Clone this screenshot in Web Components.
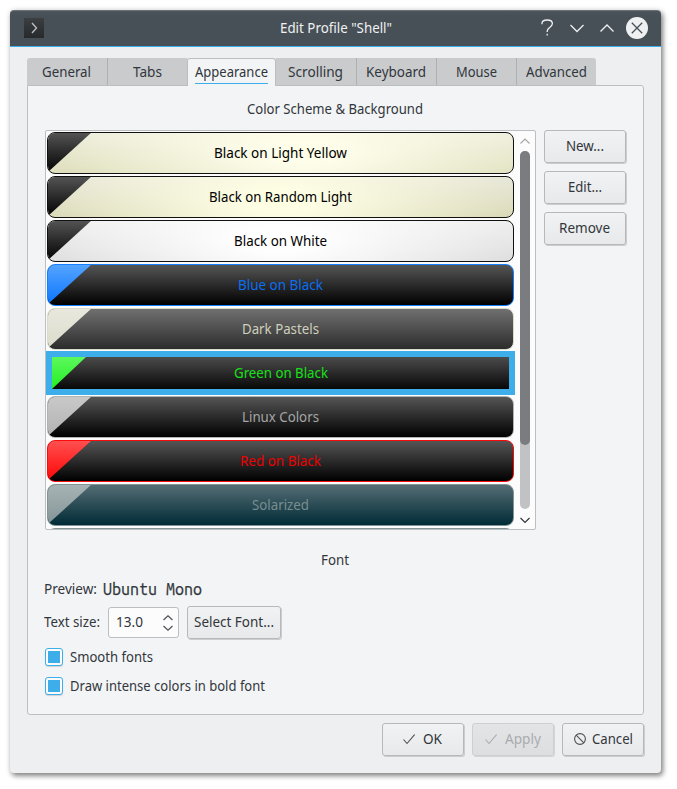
<!DOCTYPE html>
<html lang="en">
<head>
<meta charset="utf-8">
<title>Edit Profile "Shell"</title>
<style>
html,body{margin:0;background:#fff}
body{width:677px;height:789px;overflow:hidden;padding:10px 16px 16px 10px;box-sizing:border-box;
font-family:"Noto Sans","Open Sans",sans-serif;font-size:14.4px;line-height:20px;color:#31363b}
</style>
</head>
<body>
<profile-dialog></profile-dialog>
<script>
function define(name, html, init) {
  const tpl = document.createElement('template');
  tpl.innerHTML = '<style>*{box-sizing:border-box}svg{display:block;flex:none}</style>' + html;
  customElements.define(name, class extends HTMLElement {
    connectedCallback() {
      if (this.shadowRoot) return;
      this.attachShadow({mode: 'open'}).appendChild(tpl.content.cloneNode(true));
      if (init) init.call(this, this.shadowRoot);
    }
  });
}

/* A one-line label condensed or widened to the width given in "w". */
define('fit-label', `<style>
:host{display:inline-block;flex:none;height:20px;white-space:nowrap;overflow:visible}
span{display:inline-block;transform-origin:0 50%}
</style><span><slot></slot></span>`, function (root) {
  const w = +this.getAttribute('w'), s = root.querySelector('span');
  this.style.width = w + 'px';
  s.style.transform = 'scaleX(' + w / s.getBoundingClientRect().width + ')';
});

define('title-bar', `<style>
:host{display:flex;height:37px;background:linear-gradient(#4d545b,#475057 5px);border-bottom:1px solid #3daee9;
border-top:1px solid #6b7278;border-radius:4px 4px 0 0;color:#eff0f1;align-items:center;padding:0 12px 1px 14px}
.app{width:20px;height:20px;background:linear-gradient(#3b3f42,#27292b)}
.t{flex:1;display:flex;justify-content:center;padding-left:90px;padding-bottom:1px}
</style>
<div class="app"><svg width="20" height="20" fill="none" stroke="#b9bdbf" stroke-width="1.4"><path d="M8 5l4.500 5L8 15"/></svg></div>
<div class="t"><slot></slot></div>
<svg width="112" height="24" fill="none" stroke="#eff0f1" stroke-width="1.3">
<path d="M5 8.200V7.500Q5 4 10.200 4T15.400 7.600Q15.400 9.500 12.600 11.600Q10.200 13.200 10.200 15.300V16M10.200 17.800v1.600"/>
<path d="M33.500 9l6.500 6.500L46.500 9M63.500 15.500l6.500-6.500L76.500 15.500"/>
<circle cx="100" cy="12" r="11" fill="#eff0f1" stroke="none"/>
<path d="M94.800 6.800l10.400 10.400M105.200 6.800l-10.400 10.400" stroke="#475057"/></svg>`);

define('tab-item', `<style>
:host{display:flex;height:27px;width:80px;background:#c9cbcd;justify-content:center;align-items:center;border-right:1px solid #aeb1b4}
:host([first]){width:81px;border-radius:3px 0 0 0}
:host([noline]){border-right:0}
:host([last]){border-right:0;border-radius:0 3px 0 0}
:host([active]){width:89px;height:28px;background:#f3f4f6;border:1px solid #bcbec0;border-bottom:0;border-radius:3px 3px 0 0;align-items:flex-start}
div{height:20px;margin:1px 1px 0 0}
:host([active]) div{height:25px;padding-top:3px;border-bottom:1px solid #3daee9;margin:0}
</style><div><slot></slot></div>`);

define('push-button', `<style>
:host{display:flex;flex:none;gap:8px;width:82px;height:33px;border:1px solid #b6b8ba;border-radius:3px;
background:linear-gradient(#f1f2f3,#e8e9ea);box-shadow:1px 1px 0 #cbcdcf;justify-content:center;align-items:center;padding:0 1px 1px 0}
:host([disabled]){background:linear-gradient(#e3e4e6,#dddee0);border-color:#cdcfd1;box-shadow:1px 1px 0 #d3d5d7;color:#a9acaf}
</style><slot name="icon"></slot><slot></slot>`);

define('check-option', `<style>
:host{display:flex;height:18px;gap:7px;align-items:center}
i{width:18px;height:18px;border:1px solid #3daee9;border-radius:3px;background:#fcfcfc;padding:2px;box-shadow:0 1px 1px #cfd2d4}
i::before{content:"";display:block;width:12px;height:12px;background:#3daee9}
</style><i></i><slot></slot>`);

define('spin-box', `<style>
:host{display:flex;width:71px;height:31px;border:1px solid #bcbec0;border-radius:3px;background:#fcfcfc;align-items:center;justify-content:space-between;padding:0 5px 2px 6.5px}
svg{margin-top:2px}
</style><slot></slot><svg width="10" height="16" fill="none" stroke="#4d5155" stroke-width="1.200"><path d="M.5 5L5 .8 9.500 5M.5 11L5 15.200 9.500 11"/></svg>`);

define('scheme-row', `<style>
:host{display:block;height:44px;padding:1px}
.c{height:42px;border:1px solid var(--fg);border-radius:8px;position:relative;overflow:hidden;background:var(--bg);display:flex;align-items:center;justify-content:center;color:var(--tx);padding-bottom:1px}
.c::before{content:"";position:absolute;left:-1px;top:-1px;width:45px;height:41px;background:var(--corner);clip-path:polygon(0 0,100% 0,0 100%)}
:host([selected]){padding:6px;background:#3daee9}
:host([selected]) .c{height:32px;border:0;border-radius:0;padding:0}
:host([selected]) .c::before{left:0;top:0;width:34px;height:32px}
</style><div class="c"><slot></slot></div>`, function () {
  for (const k of ['fg', 'bg', 'tx', 'corner']) this.style.setProperty('--' + k, this.getAttribute(k));
});

define('scroll-bar', `<style>
:host{display:flex;flex-direction:column;align-items:center;width:10px;padding:7px 0 5px;height:398px}
.t{width:10px;height:358px;margin:6px 0 8px;border-radius:5px;background:#c1c2c4}
.h{height:294px;border-radius:5px;background:#7b7c80}
</style><svg width="10" height="7" fill="none" stroke="#a4a6a8" stroke-width="1.100"><path d="M.5 5.500L5 1 9.500 5.500"/></svg>
<div class="t"><div class="h"></div></div>
<svg width="10" height="7" fill="none" stroke="#31363b" stroke-width="1.200"><path d="M.5 1L5 5.500 9.500 1"/></svg>`);

define('scheme-list', `<style>
:host{display:flex;flex:none;width:491px;height:400px;border:1px solid #bcbec0;border-radius:2px;background:#fcfcfc;overflow:hidden}
.r{width:469px;height:398px;overflow:hidden;margin-right:5px}
</style><div class="r">
<scheme-row fg="#111" tx="#000" corner="linear-gradient(#555,#000)" bg="radial-gradient(ellipse 245px 85px at 55% 45%,#ffffe8,#fdfdea 15%,rgba(255,255,225,0)),linear-gradient(#ededdc,#dfdfbd)"><fit-label w="133">Black on Light Yellow</fit-label></scheme-row>
<scheme-row fg="#111" tx="#000" corner="linear-gradient(#555,#000)" bg="radial-gradient(ellipse 245px 85px at 50% 60%,#fefee1,#fdfde4 15%,rgba(255,255,215,0)),linear-gradient(#e8e7d9,#d8d8b6)"><fit-label w="143">Black on Random Light</fit-label></scheme-row>
<scheme-row fg="#111" tx="#000" corner="linear-gradient(#555,#000)" bg="radial-gradient(ellipse 245px 85px at 50% 45%,#fff,#fefefe 15%,rgba(255,255,255,0)),linear-gradient(#eee,#ddd)"><fit-label w="93">Black on White</fit-label></scheme-row>
<scheme-row fg="#1480ff" tx="#0a6ff0" corner="linear-gradient(#56a5ff,#0a75ff)" bg="linear-gradient(#555,#000)"><fit-label w="85">Blue on Black</fit-label></scheme-row>
<scheme-row fg="#d9dac9" tx="#cfcfbd" corner="linear-gradient(#e8e8de,#dcdccb)" bg="linear-gradient(#707070,#2c2c2c)"><fit-label w="77">Dark Pastels</fit-label></scheme-row>
<scheme-row selected fg="#18f018" tx="#18e018" corner="linear-gradient(#5cf85c,#24f024)" bg="linear-gradient(#4b4b4b,#080808)"><fit-label w="94">Green on Black</fit-label></scheme-row>
<scheme-row fg="#b2b2b2" tx="#a6a6a6" corner="linear-gradient(#c9c9c9,#b2b2b2)" bg="linear-gradient(#555,#000)"><fit-label w="77">Linux Colors</fit-label></scheme-row>
<scheme-row fg="#fb0a0a" tx="#ec0000" corner="linear-gradient(#ff5151,#ff0505)" bg="linear-gradient(#555,#000)"><fit-label w="81">Red on Black</fit-label></scheme-row>
<scheme-row fg="#839496" tx="#788d91" corner="linear-gradient(#a8b4b5,#839496)" bg="linear-gradient(#556d74,#002b36)"><fit-label w="57">Solarized</fit-label></scheme-row>
<scheme-row fg="#839496" tx="#657b83" corner="linear-gradient(#a8b4b5,#839496)" bg="#fdf6e3"></scheme-row>
</div><scroll-bar></scroll-bar>`);

define('profile-dialog', `<style>
:host{display:flex;flex-direction:column;width:651px;height:763px;background:#eeeff1;border-radius:4px;
box-shadow:2px 3px 5px rgba(0,0,0,.38),1px 1px 6px rgba(0,0,0,.22)}
.tabs{display:flex;height:28px;margin:11px 17px -1px;position:relative}
.panel{height:630px;margin:0 17px;background:#f3f4f6;border:1px solid #bcbec0;border-radius:0 3px 3px 3px;padding:13px 17px 0 17px;display:flex;flex-direction:column}
.h{height:20px;display:flex;justify-content:center;margin-left:-1px}
.row{display:flex}
.main{margin-top:11px;gap:8px}
.side{display:flex;flex-direction:column;gap:8px}
.font{margin-top:20px}
.prev{margin:9px 0 0 -1px;gap:6px;height:20px}
.mono{font-family:"Ubuntu Mono","DejaVu Sans Mono","Liberation Mono",monospace;font-size:16.5px;-webkit-text-stroke:.25px #31363b}
.size{margin:7px 0 0 -1px;height:33px;align-items:center}
.size>fit-label{margin-bottom:2px}
.size spin-box{margin:0 8px 0 8px}
.size push-button{width:94px}
check-option{margin-top:9px}
check-option+check-option{margin-top:11px}
.foot{display:flex;justify-content:flex-end;gap:8px;margin:8px 17px 0}
</style>
<title-bar><fit-label w="112">Edit Profile "Shell"</fit-label></title-bar>
<div class="tabs">
<tab-item first><fit-label w="49">General</fit-label></tab-item>
<tab-item noline style="width:79px"><fit-label w="29">Tabs</fit-label></tab-item>
<tab-item active><fit-label w="73">Appearance</fit-label></tab-item>
<tab-item style="width:81px"><fit-label w="55">Scrolling</fit-label></tab-item>
<tab-item><fit-label w="60">Keyboard</fit-label></tab-item>
<tab-item><fit-label w="41">Mouse</fit-label></tab-item>
<tab-item last style="width:79px"><fit-label w="61">Advanced</fit-label></tab-item>
</div>
<div class="panel">
<div class="h"><fit-label w="176">Color Scheme &amp; Background</fit-label></div>
<div class="row main"><scheme-list></scheme-list>
<div class="side"><push-button><fit-label w="38">New...</fit-label></push-button><push-button><fit-label w="34">Edit...</fit-label></push-button><push-button><fit-label w="51">Remove</fit-label></push-button></div></div>
<div class="h font"><fit-label w="28">Font</fit-label></div>
<div class="row prev"><fit-label w="53">Preview:</fit-label><fit-label w="99" class="mono">Ubuntu Mono</fit-label></div>
<div class="row size"><fit-label w="56">Text size:</fit-label><spin-box><fit-label w="27">13.0</fit-label></spin-box><push-button><fit-label w="80">Select Font...</fit-label></push-button></div>
<check-option><fit-label w="83">Smooth fonts</fit-label></check-option>
<check-option><fit-label w="195">Draw intense colors in bold font</fit-label></check-option>
</div>
<div class="foot">
<push-button><svg slot="icon" width="12" height="12" fill="none" stroke="#4d5155" stroke-width="1.100"><path d="M.5 6.500l3.500 4L11.600 1.500"/></svg><fit-label w="19">OK</fit-label></push-button>
<push-button disabled><svg slot="icon" width="12" height="12" fill="none" stroke="#a9acaf" stroke-width="1.100"><path d="M.5 6.500l3.500 4L11.600 1.500"/></svg><fit-label w="36">Apply</fit-label></push-button>
<push-button style="gap:6px;padding-right:0"><svg slot="icon" width="12" height="12" fill="none" stroke="#4d5155" stroke-width="1.100"><circle cx="6" cy="6" r="5.400"/><path d="M2.200 2.200l7.600 7.600"/></svg><fit-label w="41">Cancel</fit-label></push-button>
</div>`);
</script>
</body>
</html>
